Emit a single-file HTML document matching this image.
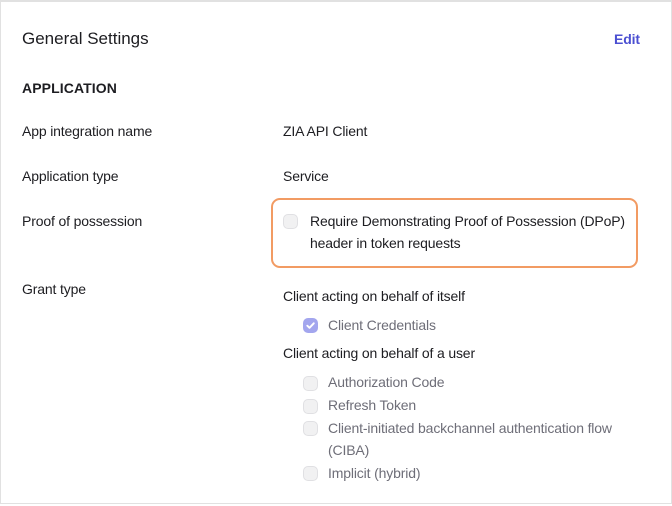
<!DOCTYPE html>
<html><head><style>
*{margin:0;padding:0;box-sizing:border-box}
body{width:672px;height:506px;background:#fff;font-family:"Liberation Sans",sans-serif;color:#1d1d21;position:relative;overflow:hidden}
.frame{position:absolute;left:0;top:0;width:672px;height:504px;border:1px solid #e1e1e1;border-top:2px solid #e1e1e1}
.t{position:absolute;white-space:nowrap;font-size:14px;line-height:20px;letter-spacing:-0.15px}
.g{color:#6e6e78}
.cb{position:absolute;width:15px;height:15px;border-radius:5px;background:#f1f1f2;border:1px solid #e0e0e3}
.box{position:absolute;left:271px;top:198px;width:367px;height:70px;border:2px solid #f29b63;border-radius:9px}
</style></head><body>
<div class="frame"></div>
<div class="t" style="left:22px;top:28px;font-size:17px;line-height:22px;letter-spacing:0">General Settings</div>
<div class="t" style="left:614px;top:29px;color:#4b4fd1;font-weight:bold;font-size:14px">Edit</div>
<div class="t" style="left:22px;top:78px;font-weight:bold;font-size:14px;letter-spacing:0.1px">APPLICATION</div>
<div class="t" style="left:22px;top:121px">App integration name</div>
<div class="t" style="left:283px;top:121px">ZIA API Client</div>
<div class="t" style="left:22px;top:166px">Application type</div>
<div class="t" style="left:283px;top:166px">Service</div>
<div class="t" style="left:22px;top:211px">Proof of possession</div>
<div class="box"></div>
<div class="cb" style="left:283px;top:214px"></div>
<div class="t" style="left:310px;top:211px">Require Demonstrating Proof of Possession (DPoP)</div>
<div class="t" style="left:310px;top:233px">header in token requests</div>
<div class="t" style="left:22px;top:279px">Grant type</div>
<div class="t" style="left:283px;top:286px">Client acting on behalf of itself</div>
<div class="cb" style="left:303px;top:318px;background:#a3a6ee;border-color:#a3a6ee"><svg width="13" height="13" viewBox="0 0 13 13" style="position:absolute;left:0;top:0"><path d="M3.3 6.7l2.2 2.1 4.3-4.5" stroke="#fff" stroke-width="1.9" fill="none" stroke-linecap="round" stroke-linejoin="round"/></svg></div>
<div class="t g" style="left:328px;top:315px">Client Credentials</div>
<div class="t" style="left:283px;top:343px">Client acting on behalf of a user</div>
<div class="cb" style="left:303px;top:376px"></div>
<div class="t g" style="left:328px;top:372px">Authorization Code</div>
<div class="cb" style="left:303px;top:399px"></div>
<div class="t g" style="left:328px;top:395px">Refresh Token</div>
<div class="cb" style="left:303px;top:421px"></div>
<div class="t g" style="left:328px;top:418px">Client-initiated backchannel authentication flow</div>
<div class="t g" style="left:328px;top:440px">(CIBA)</div>
<div class="cb" style="left:303px;top:466px"></div>
<div class="t g" style="left:328px;top:463px">Implicit (hybrid)</div>
</body></html>
